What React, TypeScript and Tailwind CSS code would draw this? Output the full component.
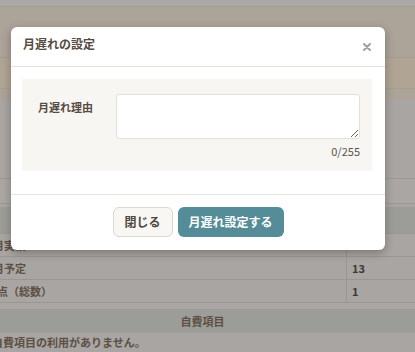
const FONT = { fontFamily: '"Noto Sans CJK JP", "Noto Sans", sans-serif' };

const ROWS = [
  { label: "当月実績", value: "", shift: "ml-[-18px]" },
  { label: "翌月予定", value: "13", shift: "ml-[-18px]" },
  { label: "保有点（総数）", value: "1", shift: "ml-[-25px]" },
];

function Backdrop() {
  return (
    <div className="w-[415px] h-[352px] overflow-hidden bg-[#a8a5a2]">
      <div className="h-[6px] bg-[#aaa8a6]" />
      <div className="h-[51px] bg-[#aca399] border-t border-[#a29c96]" />
      <div className="h-[31px] bg-[#b0a594] border-t border-[#a69d90]" />
      <div className="h-[12px] bg-[#aca399] border-t border-[#a69d90]" />
      <div className="h-[78px] bg-[#a8a5a2]" />
      <div className="h-[25px] bg-[#a9a6a3] border-t border-[#9c9995]" />
      <div className="h-[4px] bg-[#a8a5a2] border-t border-[#9c9995]" />
      <div className="h-[26px] bg-[#9c9d98]" />
      {ROWS.map((r) => (
        <div key={r.label} className="flex h-[23px] border-t border-[#9a9792] text-[11px] font-bold">
          <div className="w-[347px] flex items-center text-[#5c4f45] border-r border-[#9a9792]">
            <span className={`${r.shift} whitespace-nowrap`}>{r.label}</span>
          </div>
          <div className="flex-1 flex items-center pl-[5px] text-[#3e3935]">{r.value}</div>
        </div>
      ))}
      <div className="h-[7px] bg-[#a9a6a3] border-t border-[#9a9792]" />
      <div className="h-[24px] bg-[#9c9d98] flex items-center justify-center pr-[10px] text-[11px] font-bold text-[#5c4f45]">
        自費項目
      </div>
      <div className="h-[19px] flex items-center text-[11px] font-bold text-[#5c4f45]">
        <span className="ml-[-8px] whitespace-nowrap">自費項目の利用がありません。</span>
      </div>
    </div>
  );
}

function Modal() {
  return (
    <div className="absolute left-[11px] top-[27px] w-[374px] h-[223px] bg-white rounded-[6px] shadow-[0_3px_10px_rgba(0,0,0,0.28)] flex flex-col">
      <div className="relative h-[40px] border-b border-[#e6e0da] pl-[12px] pt-[10px]">
        <h2 className="text-[12px] leading-[14px] font-bold text-[#574b42]">月遅れの設定</h2>
        <svg className="absolute right-[14px] top-[16px]" width="8" height="8" viewBox="0 0 8 8">
          <path d="M1 1L7 7M7 1L1 7" stroke="#a0a0a0" strokeWidth="2" strokeLinecap="round" />
        </svg>
      </div>
      <div className="h-[128px] pt-[12px] pl-[11px] pr-[13px] border-b border-[#e6e2de]">
        <div className="bg-[#f7f6f3] h-[92px] pt-[15px] pl-[16px] pr-[12px] flex">
          <label className="w-[78px] pt-[6px] text-[11px] leading-[14px] font-bold text-[#574b42]">
            月遅れ理由
          </label>
          <div className="flex-1 flex flex-col items-end">
            <textarea className="w-full h-[45px] bg-white border border-[#e4dfd9] rounded-[3px] resize-y outline-none" />
            <span className="mt-[5px] text-[11px] leading-[14px] text-[#5a534d]">0/255</span>
          </div>
        </div>
      </div>
      <div className="flex justify-center gap-[5px] pt-[12px]">
        <button className="w-[60px] h-[30px] rounded-[6px] border border-[#dcd7cf] bg-[#f8f7f4] text-[12px] font-bold text-[#4f4740]">
          閉じる
        </button>
        <button className="w-[106px] h-[30px] rounded-[6px] bg-[#548c98] text-[12px] font-bold text-white">
          月遅れ設定する
        </button>
      </div>
    </div>
  );
}

export default function App() {
  return (
    <div className="relative w-[415px] h-[352px] overflow-hidden" style={FONT}>
      <Backdrop />
      <Modal />
    </div>
  );
}
